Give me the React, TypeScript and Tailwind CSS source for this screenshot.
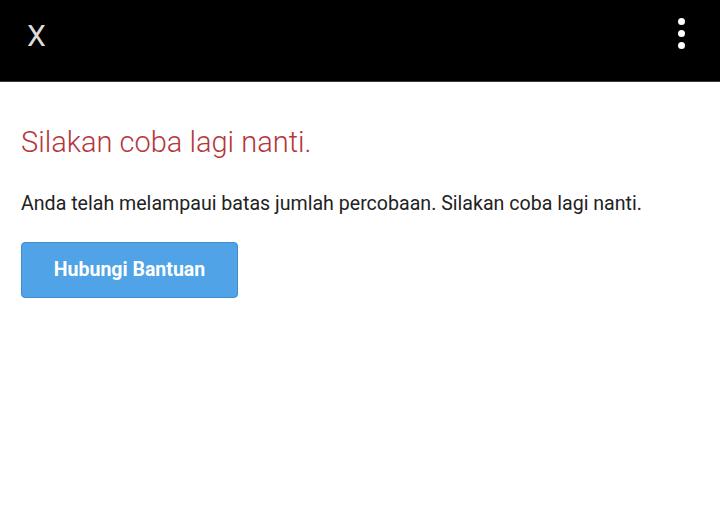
export default function App() {
  return (
    <div className="min-h-[513px] bg-white" style={{ fontFamily: 'Roboto, "Liberation Sans", sans-serif' }}>
      {/* Top bar */}
      <div className="h-[82px] bg-black border-b border-[#3a3a3a] flex items-center justify-between pl-[27px] pr-[35px]">
        <span className="text-[30px] text-[#dcdcdc] leading-none pb-[10px]">X</span>
        <div className="flex flex-col gap-[5px] pb-[14px]">
          <span className="w-[7px] h-[7px] rounded-full bg-white" />
          <span className="w-[7px] h-[7px] rounded-full bg-white" />
          <span className="w-[7px] h-[7px] rounded-full bg-white" />
        </div>
      </div>

      {/* Content */}
      <div className="px-[21px] pt-[42px]">
        <h1 className="text-[29px] font-light text-[#b5373b] leading-[36px]">Silakan coba lagi nanti.</h1>
        <p className="mt-[30px] text-[19.6px] text-[#222222] leading-[28px]">
          Anda telah melampaui batas jumlah percobaan. Silakan coba lagi nanti.
        </p>
        <button className="mt-[24px] w-[217px] h-[56px] rounded-[4px] bg-[#4fa3e6] border border-[#3f8fd0] text-white text-[19.5px] font-bold">
          Hubungi Bantuan
        </button>
      </div>
    </div>
  );
}
